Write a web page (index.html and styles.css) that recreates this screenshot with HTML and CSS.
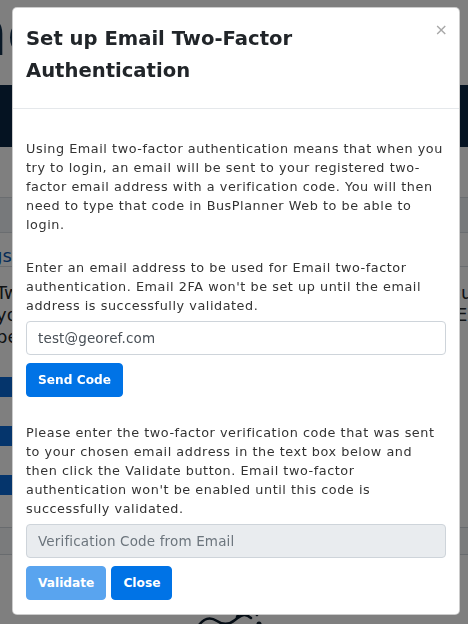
FILE: index.html
```html
<!DOCTYPE html>
<html lang="en">
<head>
  <meta charset="UTF-8" />
  <meta name="viewport" content="width=device-width, initial-scale=1.0" />
  <title>BusPlanner Web - Two-Factor Authentication</title>
  <link rel="stylesheet" href="styles.css">
</head>
<body>
  <div class="page">
    <div class="brand">Attendance</div>
    <div class="navbar"></div>

    <div class="tabs">
      <div class="tab-row"></div>
      <div class="tab-row"><span class="tab-link">Settings</span></div>
    </div>

    <div class="intro">
      <p>Two-factor authentication adds another layer of security, if you enable a method</p>
      <p>you will be asked for a code every time you log in. Each method can be set up</p>
      <p>below and removed at any time from this page.</p>
    </div>

    <div class="actions">
      <button class="page-btn">Set up Email</button>
      <button class="page-btn">Set up SMS</button>
      <button class="page-btn">Set up App</button>
    </div>

    <div class="footer-band"></div>

    <div class="logo">
      <svg width="80" height="30" viewBox="0 0 80 30">
        <path d="M4 14 C10 6, 16 6, 22 10 S34 14, 40 9 S50 2, 56 7" fill="none" stroke="#0b1a2a" stroke-width="2.5" stroke-linecap="round"/>
        <path d="M42 6 C44 0, 58 -2, 62 4" fill="none" stroke="#0b1a2a" stroke-width="2.5" stroke-linecap="round"/>
        <circle cx="64" cy="13" r="2.5" fill="#0b1a2a"/>
      </svg>
    </div>
  </div>

  <div class="backdrop"></div>

  <div class="modal">
    <div class="modal-header">
      <h5 class="modal-title">Set up Email Two-Factor Authentication</h5>
      <button class="close" type="button">&times;</button>
    </div>
    <div class="modal-body">
      <p>Using Email two-factor authentication means that when you try to login, an email will be sent to your registered two-factor email address with a verification code. You will then need to type that code in BusPlanner Web to be able to login.</p>
      <p class="lead-in">Enter an email address to be used for Email two-factor authentication. Email 2FA won't be set up until the email address is successfully validated.</p>
      <input class="form-control" type="email" value="test@georef.com">
      <div class="btn-row">
        <button class="btn">Send Code</button>
      </div>
      <p class="lead-in code-note">Please enter the two-factor verification code that was sent to your chosen email address in the text box below and then click the Validate button. Email two-factor authentication won't be enabled until this code is successfully validated.</p>
      <input class="form-control" type="text" placeholder="Verification Code from Email" disabled>
      <div class="btn-row">
        <button class="btn" disabled>Validate</button>
        <button class="btn">Close</button>
      </div>
    </div>
  </div>
</body>
</html>
```

FILE: styles.css
```css
* {
  box-sizing: border-box;
}

body {
  margin: 0;
  font-family: "DejaVu Sans", Verdana, sans-serif;
  color: #212529;
  background-color: #fff;
  overflow: hidden;
}

/* page behind the dialog */
.page {
  height: 624px;
  overflow: hidden;
}

.brand {
  height: 85px;
  padding-top: 1px;
  margin-left: -327px;
  font-size: 64px;
  line-height: 64px;
  font-weight: bold;
  color: #15324f;
  white-space: nowrap;
}

.navbar {
  height: 62px;
  background-color: #0a2744;
}

.tabs {
  margin-top: 50px;
}

.tab-row {
  height: 36px;
  background-color: #eef2f6;
  border-top: 1px solid #d4dae0;
  border-bottom: 1px solid #d4dae0;
}

.tab-row + .tab-row {
  height: 34px;
  padding-top: 13px;
  background-color: #fff;
  border-top: none;
}

.tab-link {
  display: block;
  margin-left: -62px;
  font-size: 18px;
  line-height: 20px;
  color: #0a58b0;
}

.intro {
  padding-top: 15px;
  margin: 0 -60px 0 -4px;
  font-size: 18px;
  line-height: 22px;
  white-space: nowrap;
}

.intro p {
  margin: 0;
}

.actions {
  display: flex;
  flex-direction: column;
  align-items: flex-start;
  gap: 29px;
  margin-top: 29px;
}

.page-btn {
  height: 20px;
  width: 100px;
  border: none;
  background-color: #0a6ad8;
}

.footer-band {
  margin-top: 32px;
  height: 28px;
  background-color: #f4f6f8;
  border-top: 1px solid #d0d6dc;
  border-bottom: 1px solid #d0d6dc;
}

.logo {
  margin-top: 56px;
  padding-left: 2px;
  display: flex;
  justify-content: center;
}

.backdrop {
  position: fixed;
  inset: 0;
  background-color: rgba(0, 0, 0, 0.5);
}

/* dialog */
.modal {
  position: absolute;
  top: 7px;
  left: 12px;
  width: 448px;
  background-color: #fff;
  border: 1px solid rgba(0, 0, 0, 0.2);
  border-radius: 5px;
}

.modal-header {
  position: relative;
  padding: 15px 40px 21px 13px;
  border-bottom: 1px solid #e5e8eb;
}

.modal-title {
  margin: 0;
  font-size: 19.6px;
  line-height: 32px;
  font-weight: bold;
  color: #212529;
}

.close {
  position: absolute;
  top: 12px;
  right: 11px;
  padding: 0;
  border: none;
  background: none;
  font-family: "DejaVu Sans", sans-serif;
  font-size: 16px;
  color: #a8a8a8;
}

.modal-body {
  padding: 30px 13px 14px;
}

.modal-body p {
  margin: 0;
  font-size: 12.8px;
  line-height: 19px;
  letter-spacing: 0.55px;
  color: #333;
}

.modal-body .lead-in {
  margin-top: 24px;
  margin-bottom: 6px;
}

.modal-body .code-note {
  margin-top: 26px;
}

.form-control {
  display: block;
  width: 100%;
  height: 34px;
  padding: 0 11px;
  font-family: "DejaVu Sans", sans-serif;
  font-size: 13.5px;
  letter-spacing: 0.15px;
  color: #495057;
  background-color: #fff;
  border: 1px solid #ced4da;
  border-radius: 4px;
}

.form-control:disabled {
  background-color: #e9ecef;
}

.form-control::placeholder {
  color: #6c757d;
}

.btn-row {
  display: flex;
  gap: 5px;
  margin-top: 8px;
}

.btn {
  height: 34px;
  padding: 0 11px;
  font-family: "DejaVu Sans", sans-serif;
  font-size: 12.2px;
  font-weight: bold;
  color: #fff;
  background-color: #0073e6;
  border: 1px solid #0073e6;
  border-radius: 4px;
}

.btn:disabled {
  opacity: 0.65;
}
```
